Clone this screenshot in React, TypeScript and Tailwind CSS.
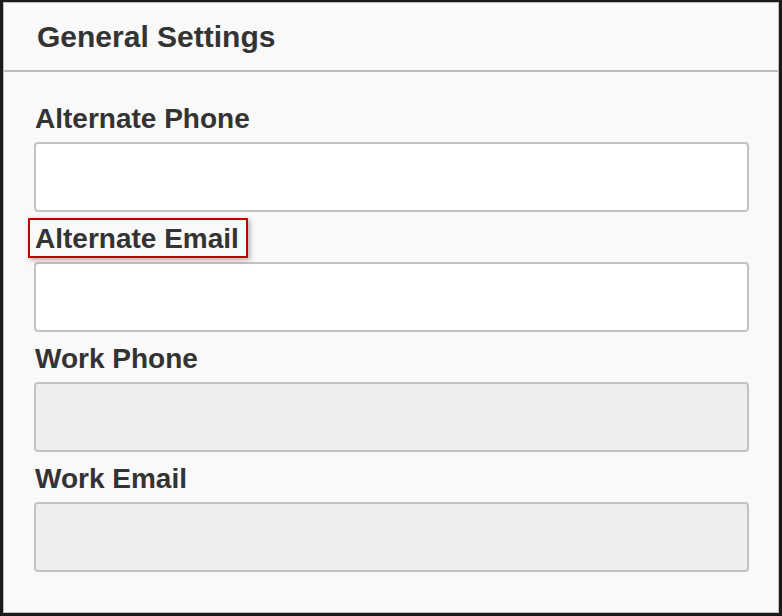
import React from "react";

function Field({ label, disabled, highlight }: { label: string; disabled?: boolean; highlight?: boolean }) {
  return (
    <div className="flex flex-col">
      <div className="h-[36px] mb-[6px] pt-[2px] flex items-center pl-[1px]">
        <span className="relative inline-block text-[28px] leading-[34px] font-bold text-[#333]">
          {highlight && (
            <span className="absolute -left-[7px] -top-[4px] -bottom-[2px] -right-[9px] border-2 border-[#c00000] shadow-[2px_2px_5px_rgba(0,0,0,0.3)]" />
          )}
          <span className="relative">{label}</span>
        </span>
      </div>
      <div
        className={`h-[70px] rounded-[4px] border-2 border-[#c2c2c2] ${disabled ? "bg-[#eeeeee]" : "bg-white"}`}
      />
    </div>
  );
}

export default function App() {
  return (
    <div className="w-[782px] h-[616px] bg-[#f9f9f9] border-l-[3px] border-r-[3px] border-b-[3px] border-t-[2px] border-[#1a1a1a] font-['Liberation_Sans']">
      <div className="h-full border border-[#bdbdbd] bg-[#f9f9f9] flex flex-col">
        <div className="h-[69px] border-b-2 border-[#bdbdbd] flex items-center pl-[33px]">
          <span className="text-[30px] font-bold text-[#333] leading-none">General Settings</span>
        </div>
        <div className="flex flex-col gap-[8px] pt-[28px] pl-[30px] pr-[29px]">
          <Field label="Alternate Phone" />
          <Field label="Alternate Email" highlight />
          <Field label="Work Phone" disabled />
          <Field label="Work Email" disabled />
        </div>
      </div>
    </div>
  );
}
